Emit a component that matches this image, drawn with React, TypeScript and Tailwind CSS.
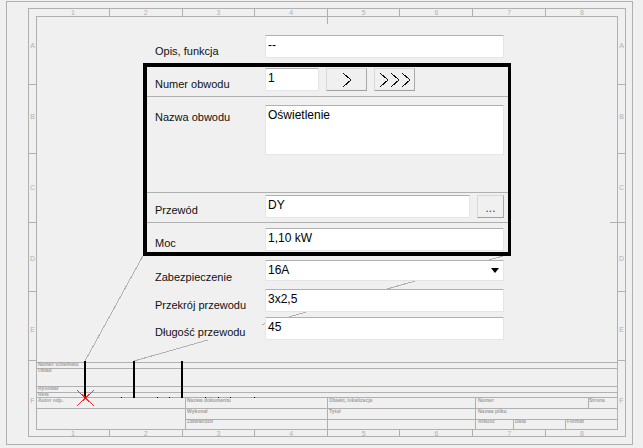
import React from 'react';

const font = { fontFamily: '"Liberation Sans", Arial, sans-serif' };

const inputBox =
  'bg-white border border-[#e3e5e8] border-t-[#b0b0b0] rounded-[1px] px-[2px] pt-[2px] text-[12px] leading-[15px] text-black';

const Sheet = () => {
  const tops = [109, 182, 254, 327, 399, 472, 545];
  const rows = [84, 153, 222, 291, 360];
  const cols = ['1', '2', '3', '4', '5', '6', '7', '8'];
  const letters = ['A', 'B', 'C', 'D', 'E', 'F'];
  const dots = [121, 157, 169, 205, 218, 230, 254];
  const labels: [number, number, string][] = [
    [38, 366, 'Numer schematu'],
    [38, 372, 'Układ'],
    [38, 390, 'Rysował'],
    [38, 396, 'Rew.'],
    [38, 402, 'Autor odp.'],
    [187, 402, 'Nazwa dokumentu'],
    [187, 413, 'Wykonał'],
    [187, 423, 'Zatwierdził'],
    [329, 402, 'Obiekt, lokalizacja'],
    [329, 413, 'Tytuł'],
    [478, 402, 'Numer'],
    [478, 413, 'Nazwa pliku'],
    [478, 423, 'Arkusz'],
    [515, 423, 'Data'],
    [567, 423, 'Format'],
    [589, 402, 'Strona'],
  ];

  return (
    <svg className="absolute inset-0" width="643" height="448" viewBox="0 0 643 448" shapeRendering="crispEdges">
      <g fill="none" stroke="#b0b0b0">
        <rect x="6.5" y="1.5" width="626" height="443" />
        <rect x="28.5" y="8.5" width="597" height="428" />
        <rect x="36.5" y="16.5" width="581" height="413" />
        {tops.map((x) => (
          <path key={x} d={`M${x}.5 9V16M${x}.5 430V436`} />
        ))}
        <path d="M327.5 16V24" />
        {rows.map((y) => (
          <path key={y} d={`M29 ${y}.5H36M618 ${y}.5H625`} />
        ))}
        <path d="M610 222.5H618" />
        <path d="M37 362.5H617M37 368.5H617M37 386.5H617M37 392.5H617M37 397.5H617M37 408.5H617M185 419.5H617" />
        <path d="M185.5 397V429M327.5 397V429M475.5 397V429M588.5 397V408M513.5 419V429M565.5 419V429" />
        <path d="M85 361L144 254" />
        <path d="M134 361L510 254" />
      </g>
      <g fill="#b0b0b0" fontSize="7" textAnchor="middle" style={font}>
        {cols.map((c, i) => (
          <React.Fragment key={c}>
            <text x={73 + i * 72.7} y={15}>{c}</text>
            <text x={73 + i * 72.7} y={436}>{c}</text>
          </React.Fragment>
        ))}
        {letters.map((l, i) => (
          <React.Fragment key={l}>
            <text x={32.5} y={48 + i * 71}>{l}</text>
            <text x={621.5} y={48 + i * 71}>{l}</text>
          </React.Fragment>
        ))}
      </g>
      <g fill="#a0a0a0" fontSize="5" fontWeight="bold" style={font}>
        {labels.map(([x, y, t]) => (
          <text key={t} x={x} y={y}>{t}</text>
        ))}
      </g>
      <g fill="#000">
        <rect x="84" y="361" width="2" height="37" />
        <rect x="133" y="361" width="2" height="37" />
        <rect x="181" y="361" width="2" height="37" />
        {dots.map((x) => (
          <rect key={x} x={x} y="397" width="1" height="1" />
        ))}
      </g>
      <path d="M77 390L94 406M94 390L77 406" stroke="#f03030" fill="none" />
      <rect x="84" y="397" width="2" height="2" fill="#d01010" />
    </svg>
  );
};

const Label = ({ children, className }: { children: React.ReactNode; className: string }) => (
  <div className={`w-[110px] shrink-0 bg-[#f0f0f0] pl-[3px] text-[11px] leading-[15px] text-[#101010] ${className}`}>
    {children}
  </div>
);

const Chevrons = ({ count }: { count: number }) => (
  <svg width={count === 1 ? 10 : 32} height="16" viewBox={count === 1 ? '0 0 10 16' : '0 0 32 16'} fill="none" stroke="#111" shapeRendering="crispEdges">
    {Array.from({ length: count }).map((_, i) => (
      <path key={i} d={`M${i * 11 + 1} 1L${i * 11 + 9} 8L${i * 11 + 1} 15`} />
    ))}
  </svg>
);

const ArrowButton = ({ count }: { count: number }) => (
  <button className="w-[41px] h-[23px] flex items-center justify-center border border-[#d8d8d8] border-r-[#a8a8a8] border-b-[#a0a0a0] bg-[#f0f0f0]">
    <Chevrons count={count} />
  </button>
);

export default function App() {
  return (
    <div className="relative w-[643px] h-[448px] overflow-hidden bg-[#f0f0f0]" style={font}>
      <Sheet />
      <div className="absolute left-[143px] top-[35px] w-[368px] flex flex-col">
        <div className="flex pl-[9px] h-[23px]">
          <Label className="pt-[9px] h-[24px]">Opis, funkcja</Label>
          <div className={`${inputBox} ml-[3px] w-[239px] h-[23px]`}>--</div>
        </div>

        <div className="mt-[5px] border-4 border-r-[3px] border-black h-[193px] flex flex-col">
          <div className="flex h-[30px] pl-[5px] border-b border-[#b0b0b0]">
            <Label className="pt-[10px] h-[28px]">Numer obwodu</Label>
            <div className="flex ml-[3px] mt-[1px] h-[23px]">
              <div className={`${inputBox} w-[54px] h-[23px]`}>1</div>
              <div className="ml-[7px]"><ArrowButton count={1} /></div>
              <div className="ml-[7px]"><ArrowButton count={3} /></div>
            </div>
          </div>
          <div className="flex h-[96px] pl-[5px] border-b border-[#b0b0b0]">
            <Label className="pt-[13px] h-[30px]">Nazwa obwodu</Label>
            <div className={`${inputBox} ml-[3px] mt-[8px] w-[239px] h-[50px]`}>Oświetlenie</div>
          </div>
          <div className="flex h-[30px] pl-[5px] border-b border-[#b0b0b0]">
            <Label className="pt-[10px] h-[28px]">Przewód</Label>
            <div className={`${inputBox} ml-[3px] mt-[2px] w-[205px] h-[23px]`}>DY</div>
            <button className="ml-[7px] mt-[2px] w-[27px] h-[23px] pt-[4px] border border-[#d8d8d8] border-r-[#a8a8a8] border-b-[#a0a0a0] bg-[#f0f0f0] text-[12px] leading-[15px] text-[#444]">
              ...
            </button>
          </div>
          <div className="flex h-[29px] pl-[5px]">
            <Label className="pt-[13px] h-[29px]">Moc</Label>
            <div className={`${inputBox} ml-[3px] mt-[5px] w-[239px] h-[23px]`}>1,10 kW</div>
          </div>
        </div>

        <div className="mt-[4px] flex pl-[9px] h-[21px]">
          <Label className="pt-[10px] h-[25px]">Zabezpieczenie</Label>
          <div className={`${inputBox} ml-[3px] w-[239px] h-[21px] flex justify-between`}>
            <span>16A</span>
            <svg className="mt-[5px] mr-[2px]" width="8" height="5" viewBox="0 0 8 5" fill="#000">
              <path d="M0 0H8L4 5Z" />
            </svg>
          </div>
        </div>

        <div className="mt-[8px] flex pl-[9px] h-[23px]">
          <Label className="pt-[9px] h-[24px]">Przekrój przewodu</Label>
          <div className={`${inputBox} ml-[3px] w-[239px] h-[23px]`}>3x2,5</div>
        </div>

        <div className="mt-[5px] flex pl-[9px] h-[23px]">
          <Label className="pt-[8px] h-[23px]">Długość przewodu</Label>
          <div className={`${inputBox} ml-[3px] w-[239px] h-[23px]`}>45</div>
        </div>
      </div>
    </div>
  );
}
